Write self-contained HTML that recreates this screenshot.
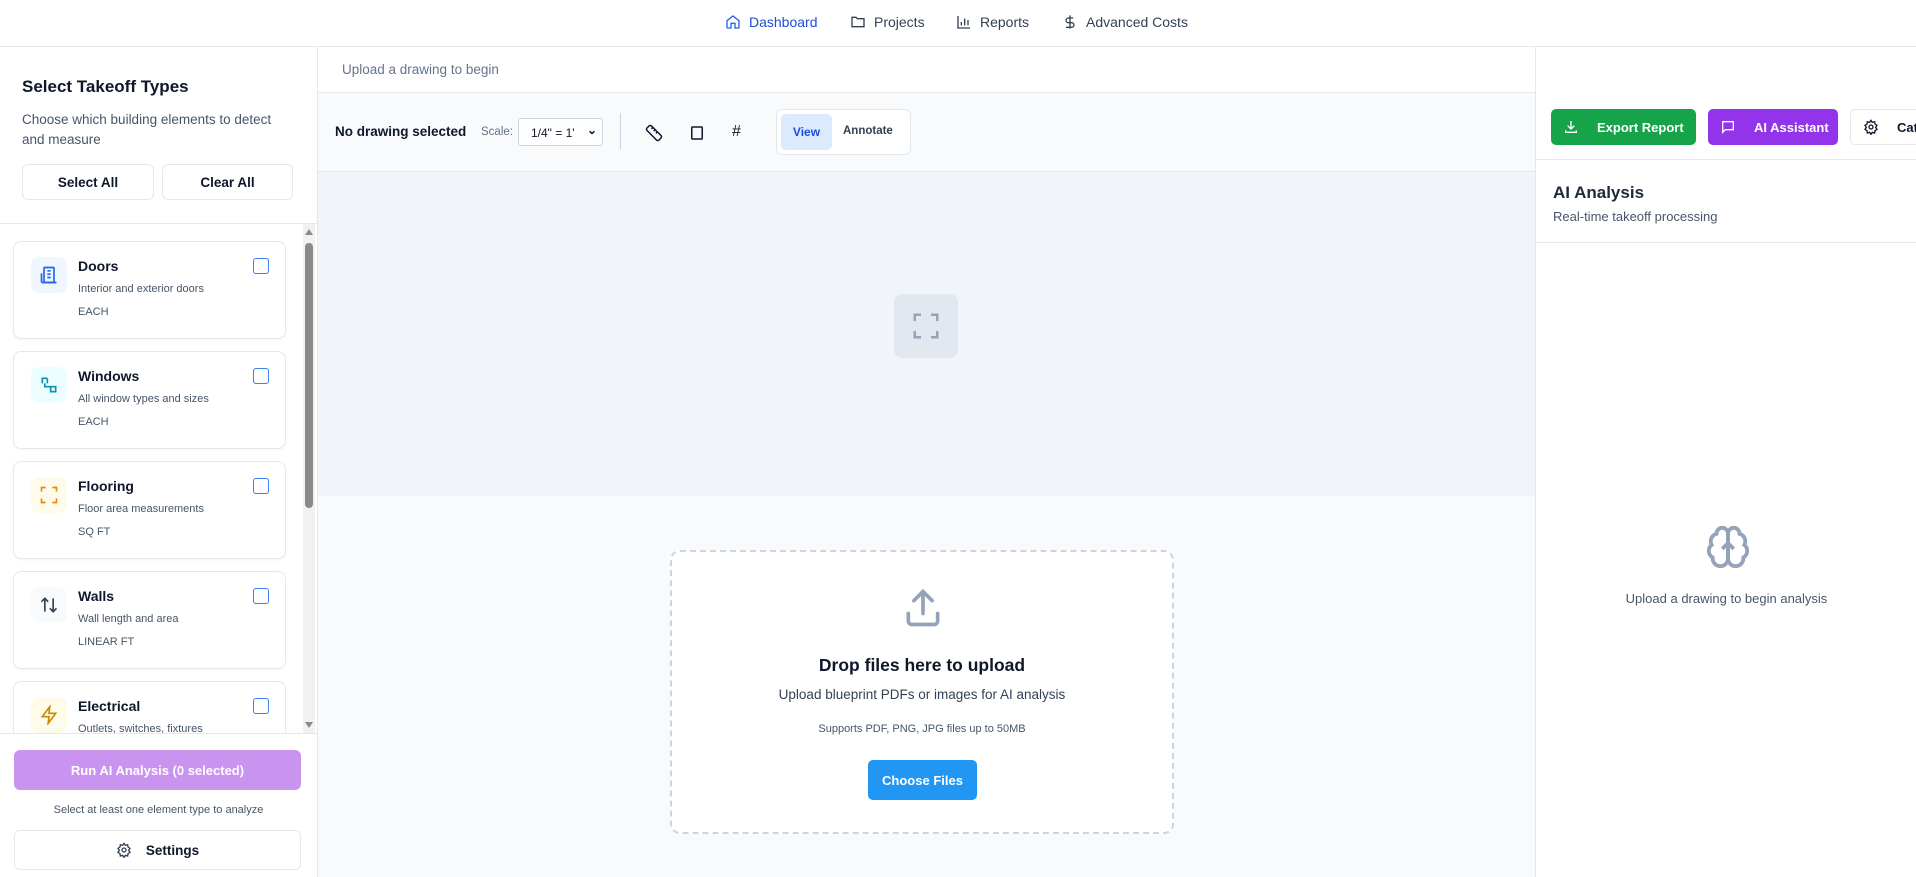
<!DOCTYPE html>
<html><head><meta charset="utf-8"><style>
*{box-sizing:border-box;margin:0;padding:0}
body{width:1916px;height:877px;overflow:hidden;background:#fff;font-family:"Liberation Sans",sans-serif;color:#0f172a;position:relative}
.a{position:absolute}
.nav{left:0;top:0;width:1916px;height:47px;border-bottom:1px solid #e2e8f0;background:#fff}
.ni{position:absolute;top:14px;font-size:14px;color:#334155;display:flex;align-items:center;gap:8px}
.ni svg{width:16px;height:16px}
.side{left:0;top:47px;width:318px;height:830px;border-right:1px solid #e2e8f0;background:#fff}
.btn{position:absolute;border:1px solid #e2e8f0;border-radius:6px;background:#fff;font-size:14px;font-weight:bold;display:flex;align-items:center;justify-content:center}
.card{position:absolute;left:13px;width:273px;height:98px;border:1px solid #e2e8f0;border-radius:8px;background:#fff;box-shadow:0 1px 2px rgba(0,0,0,.04)}
.card .ic{position:absolute;left:17px;top:15px;width:36px;height:36px;border-radius:8px;display:flex;align-items:center;justify-content:center}
.card .t{position:absolute;left:64px;top:16px;font-size:14px;font-weight:bold}
.card .d{position:absolute;left:64px;top:41px;font-size:11px;color:#475569}
.card .u{position:absolute;left:64px;top:64px;font-size:11px;color:#475569}
.card .cb{position:absolute;left:239px;top:16px;width:16px;height:16px;border:1.5px solid #3b82f6;border-radius:3px}
</style></head><body>
<div class="a nav">
  <div class="ni" style="left:725px;color:#1d4ed8"><svg viewBox="0 0 24 24" fill="none" stroke="#2563eb" stroke-width="2"><path d="M3 10l9-7 9 7v10a1 1 0 0 1-1 1h-5v-7H9v7H4a1 1 0 0 1-1-1z"/></svg>Dashboard</div>
  <div class="ni" style="left:850px"><svg viewBox="0 0 24 24" fill="none" stroke="#334155" stroke-width="2"><path d="M3 5h6l2 2h10v12H3z"/></svg>Projects</div>
  <div class="ni" style="left:956px"><svg viewBox="0 0 24 24" fill="none" stroke="#334155" stroke-width="2"><path d="M3 3v18h18M8 17v-5M13 17V7M18 17v-8"/></svg>Reports</div>
  <div class="ni" style="left:1062px"><svg viewBox="0 0 24 24" fill="none" stroke="#334155" stroke-width="2"><path d="M12 2v20M17 6H9.5a3.5 3.5 0 0 0 0 7h5a3.5 3.5 0 0 1 0 7H6"/></svg>Advanced Costs</div>
</div>

<div class="a side">
  <div class="a" style="left:22px;top:30px;font-size:17px;font-weight:bold">Select Takeoff Types</div>
  <div class="a" style="left:22px;top:63px;font-size:13.5px;color:#475569;line-height:20px;width:265px">Choose which building elements to detect and measure</div>
  <div class="btn" style="left:22px;top:117px;width:132px;height:36px;font-size:13.5px">Select All</div>
  <div class="btn" style="left:162px;top:117px;width:131px;height:36px;font-size:13.5px">Clear All</div>
  <div class="a" style="left:0;top:176px;width:317px;height:1px;background:#e2e8f0"></div>
  <div class="a" style="left:303px;top:177px;width:12px;height:509px;background:#f1f1f1"></div>
  <div class="a" style="left:305px;top:196px;width:8px;height:265px;background:#8a8a8a;border-radius:4px"></div>
  <div class="a" style="left:305px;top:182px;width:0;height:0;border-left:4px solid transparent;border-right:4px solid transparent;border-bottom:6px solid #8a8a8a"></div>
  <div class="a" style="left:305px;top:675px;width:0;height:0;border-left:4px solid transparent;border-right:4px solid transparent;border-top:6px solid #8a8a8a"></div>
  <div class="a" style="left:0;top:177px;width:300px;height:509px;overflow:hidden">
    <div class="card" style="top:17px"><div class="ic" style="background:#eff6ff"><svg width="20" height="20" viewBox="0 0 24 24" fill="none" stroke="#2563eb" stroke-width="2"><rect x="6" y="3" width="12" height="18" rx="1"/><path d="M10 7h4M10 11h4M10 15h4M3 21h18M3 10v11"/></svg></div><div class="t">Doors</div><div class="d">Interior and exterior doors</div><div class="u">EACH</div><div class="cb"></div></div>
    <div class="card" style="top:127px"><div class="ic" style="background:#ecfeff"><svg width="20" height="20" viewBox="0 0 24 24" fill="none" stroke="#0891b2" stroke-width="2"><path d="M4 10V4h6M10 4v6M14 14h6v6h-6z M7 10v4h7"/></svg></div><div class="t">Windows</div><div class="d">All window types and sizes</div><div class="u">EACH</div><div class="cb"></div></div>
    <div class="card" style="top:237px"><div class="ic" style="background:#fffbeb"><svg width="20" height="20" viewBox="0 0 24 24" fill="none" stroke="#ea8a0c" stroke-width="2"><path d="M3 8V3h5M16 3h5v5M21 16v5h-5M8 21H3v-5"/></svg></div><div class="t">Flooring</div><div class="d">Floor area measurements</div><div class="u">SQ FT</div><div class="cb"></div></div>
    <div class="card" style="top:347px"><div class="ic" style="background:#f8fafc"><svg width="20" height="20" viewBox="0 0 24 24" fill="none" stroke="#334155" stroke-width="2"><path d="M7 20V4M3 8l4-4 4 4M17 4v16M13 16l4 4 4-4"/></svg></div><div class="t">Walls</div><div class="d">Wall length and area</div><div class="u">LINEAR FT</div><div class="cb"></div></div>
    <div class="card" style="top:457px"><div class="ic" style="background:#fefce8"><svg width="20" height="20" viewBox="0 0 24 24" fill="none" stroke="#ca8a04" stroke-width="2"><path d="M13 2L4 14h8l-1 8 9-12h-8z"/></svg></div><div class="t">Electrical</div><div class="d">Outlets, switches, fixtures</div><div class="u">EACH</div><div class="cb"></div></div>
  </div>
  <div class="a" style="left:0;top:686px;width:317px;height:1px;background:#e2e8f0"></div>
  <div class="a" style="left:14px;top:703px;width:287px;height:40px;border-radius:6px;background:#c994f0;color:#fff;font-size:13px;font-weight:bold;display:flex;align-items:center;justify-content:center">Run AI Analysis (0 selected)</div>
  <div class="a" style="left:0;top:757px;width:317px;text-align:center;font-size:11px;color:#475569">Select at least one element type to analyze</div>
  <div class="btn" style="left:14px;top:783px;width:287px;height:40px;font-weight:bold;gap:14px;font-size:13.5px"><svg width="16" height="16" viewBox="0 0 24 24" fill="none" stroke="#334155" stroke-width="2"><circle cx="12" cy="12" r="3"/><path d="M12 2l2 3 3.5-1 .5 3.5 3 2-2 3 2 3-3 2-.5 3.5-3.5-1-2 3-2-3-3.5 1-.5-3.5-3-2 2-3-2-3 3-2 .5-3.5 3.5 1z"/></svg>Settings</div>
</div>

<div class="a" style="left:318px;top:47px;width:1217px;height:46px;border-bottom:1px solid #e2e8f0;background:#fff"><div class="a" style="left:24px;top:15px;font-size:13.5px;color:#64748b">Upload a drawing to begin</div></div>
<div class="a" style="left:318px;top:93px;width:1217px;height:79px;border-bottom:1px solid #e2e8f0;background:#f8fafc">
  <div class="a" style="left:17px;top:31px;font-size:13.5px;font-weight:bold">No drawing selected</div>
  <div class="a" style="left:163px;top:33px;font-size:11.5px;color:#64748b">Scale:</div>
  <div class="a" style="left:200px;top:25px;width:85px;height:28px;border:1px solid #cbd5e1;border-radius:3px;background:#fff;font-size:12px;padding:7px 0 0 12px">1/4" = 1'<span style="position:absolute;right:5px;top:4px;font-size:12px;font-weight:bold">&#8964;</span></div>
  <div class="a" style="left:302px;top:20px;width:1px;height:36px;background:#cbd5e1"></div>
  <svg class="a" style="left:327px;top:31px" width="18" height="18" viewBox="0 0 24 24" fill="none" stroke="#0f172a" stroke-width="2"><path d="M21.3 15.3a2.4 2.4 0 0 1 0 3.4l-2.6 2.6a2.4 2.4 0 0 1-3.4 0L2.7 8.7a2.4 2.4 0 0 1 0-3.4l2.6-2.6a2.4 2.4 0 0 1 3.4 0z M14.5 12.5l2-2M11.5 9.5l2-2M8.5 6.5l2-2"/></svg>
  <svg class="a" style="left:370px;top:31px" width="18" height="18" viewBox="0 0 24 24" fill="none" stroke="#0f172a" stroke-width="2"><rect x="5" y="4" width="14" height="16" rx="1"/></svg>
  <div class="a" style="left:414px;top:30px;font-size:16px">#</div>
  <div class="a" style="left:458px;top:16px;width:135px;height:46px;border:1px solid #e2e8f0;border-radius:6px;background:#fff"></div>
  <div class="a" style="left:463px;top:21px;width:51px;height:36px;border-radius:5px;background:#dbeafe;color:#1d4ed8;font-size:12px;font-weight:bold;display:flex;align-items:center;justify-content:center">View</div>
  <div class="a" style="left:525px;top:32px;font-size:11.5px;font-weight:bold;color:#334155">Annotate</div>
</div>
<div class="a" style="left:318px;top:172px;width:1217px;height:324px;background:#f1f5f9">
  <div class="a" style="left:576px;top:122px;width:64px;height:64px;border-radius:8px;background:#e2e8f0;display:flex;align-items:center;justify-content:center"><svg width="30" height="30" viewBox="0 0 24 24" fill="none" stroke="#94a3b8" stroke-width="2"><path d="M3 8V3h5M16 3h5v5M21 16v5h-5M8 21H3v-5"/></svg></div>
</div>
<div class="a" style="left:318px;top:496px;width:1217px;height:381px;background:#f8fafc">
  <div class="a" style="left:352px;top:54px;width:504px;height:284px;border:2px dashed #cbd5e1;border-radius:10px;background:#fff">
    <svg class="a" style="left:229px;top:34px" width="44" height="44" viewBox="0 0 24 24" fill="none" stroke="#94a3b8" stroke-width="2" stroke-linecap="round"><path d="M12 3v12M7 8l5-5 5 5M4 15v4a2 2 0 0 0 2 2h12a2 2 0 0 0 2-2v-4"/></svg>
    <div class="a" style="left:0;width:500px;top:103px;text-align:center;font-size:17.5px;font-weight:bold">Drop files here to upload</div>
    <div class="a" style="left:0;width:500px;top:135px;text-align:center;font-size:13.5px;color:#334155">Upload blueprint PDFs or images for AI analysis</div>
    <div class="a" style="left:0;width:500px;top:171px;text-align:center;font-size:11px;color:#475569">Supports PDF, PNG, JPG files up to 50MB</div>
    <div class="a" style="left:196px;top:208px;width:109px;height:40px;border-radius:5px;background:#2196f3;color:#fff;font-size:13px;font-weight:bold;display:flex;align-items:center;justify-content:center">Choose Files</div>
  </div>
</div>

<div class="a" style="left:1535px;top:47px;width:381px;height:830px;border-left:1px solid #e2e8f0;background:#fff">
  <div class="a" style="left:0;top:0;width:381px;height:113px;border-bottom:1px solid #e2e8f0"></div>
  <div class="a" style="left:15px;top:62px;width:145px;height:36px;border-radius:5px;background:#16a34a;color:#fff;font-size:13px;font-weight:bold;display:flex;align-items:center;gap:18px;padding-left:12px"><svg width="16" height="16" viewBox="0 0 24 24" fill="none" stroke="#fff" stroke-width="2"><path d="M12 3v12M7 10l5 5 5-5M4 17v3h16v-3"/></svg>Export Report</div>
  <div class="a" style="left:172px;top:62px;width:130px;height:36px;border-radius:5px;background:#9333ea;color:#fff;font-size:13px;font-weight:bold;display:flex;align-items:center;gap:18px;padding-left:12px"><svg width="16" height="16" viewBox="0 0 24 24" fill="none" stroke="#fff" stroke-width="2"><path d="M4 4h16v12H8l-4 4z"/></svg>AI Assistant</div>
  <div class="a" style="left:314px;top:62px;width:90px;height:36px;border-radius:5px;border:1px solid #e2e8f0;font-size:13px;font-weight:bold;display:flex;align-items:center;gap:18px;padding-left:12px"><svg width="16" height="16" viewBox="0 0 24 24" fill="none" stroke="#0f172a" stroke-width="2"><circle cx="12" cy="12" r="3"/><path d="M12 2l2 3 3.5-1 .5 3.5 3 2-2 3 2 3-3 2-.5 3.5-3.5-1-2 3-2-3-3.5 1-.5-3.5-3-2 2-3-2-3 3-2 .5-3.5 3.5 1z"/></svg>Cat</div>
  <div class="a" style="left:17px;top:136px;font-size:17px;font-weight:bold;color:#1e293b">AI Analysis</div>
  <div class="a" style="left:17px;top:162px;font-size:13px;color:#475569">Real-time takeoff processing</div>
  <div class="a" style="left:0;top:195px;width:381px;height:1px;background:#e2e8f0"></div>
  <svg class="a" style="left:169px;top:477px" width="46" height="46" viewBox="0 0 24 24" fill="none" stroke="#94a3b8" stroke-width="2"><path d="M12 5a3 3 0 1 0-5.997.125 4 4 0 0 0-2.526 5.77 4 4 0 0 0 .556 6.588A4 4 0 1 0 12 18Z"/><path d="M12 5a3 3 0 1 1 5.997.125 4 4 0 0 1 2.526 5.77 4 4 0 0 1-.556 6.588A4 4 0 1 1 12 18Z"/><path d="M12 5v13M9 13l3-3 3 3"/></svg>
  <div class="a" style="left:0;width:381px;top:544px;text-align:center;font-size:13px;color:#475569">Upload a drawing to begin analysis</div>
</div>
</body></html>
